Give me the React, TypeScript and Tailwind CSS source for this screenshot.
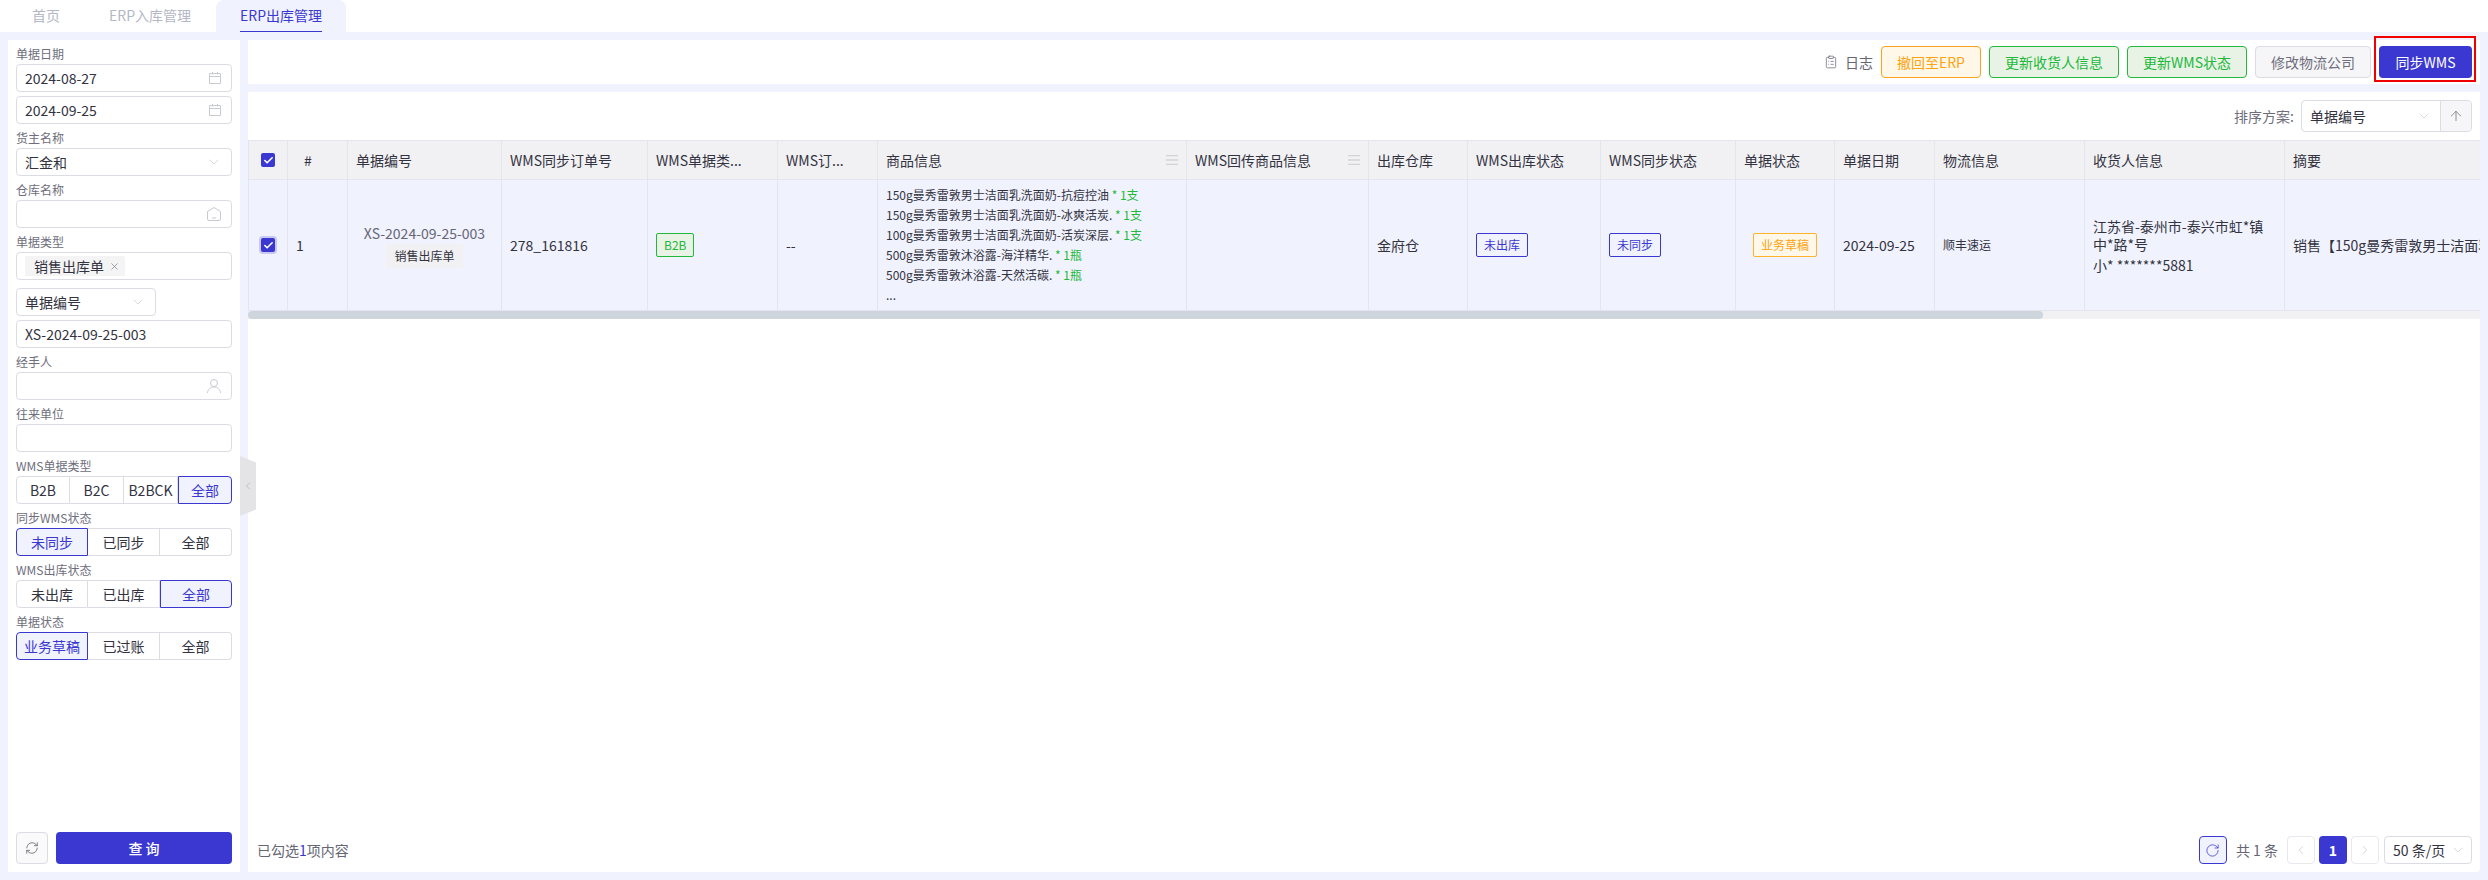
import React from 'react';
import { ClipboardList, RefreshCw, X, Check, ChevronDown, ChevronLeft, ChevronRight, ArrowUp, RotateCw } from 'lucide-react';

const CalendarIcon = () => (
  <svg width="14" height="14" viewBox="0 0 14 14" fill="none" stroke="#c9c9d1" strokeWidth="1" className="shrink-0">
    <path d="M1.5 2.5h11v10h-11z" />
    <path d="M1.5 5.5h11M4.5 1v2.5M9.5 1v2.5" />
  </svg>
);

const HouseIcon = () => (
  <svg width="16" height="16" viewBox="0 0 16 16" fill="none" stroke="#c9c9d1" strokeWidth="1" className="shrink-0">
    <path d="M1.5 5.5 8 1.5l6.5 4v7.5a1.5 1.5 0 0 1-1.5 1.5H3A1.5 1.5 0 0 1 1.5 13z" />
    <path d="M6 12h4" />
  </svg>
);

const UserIcon = () => (
  <svg width="16" height="16" viewBox="0 0 16 16" fill="none" stroke="#c9c9d1" strokeWidth="1" className="shrink-0">
    <circle cx="8" cy="5" r="3.5" />
    <path d="M1.5 15c.3-3.5 2.5-6 6.500-6s6.200 2.500 6.500 6" />
  </svg>
);

const MenuIcon = () => (
  <svg width="12" height="10" viewBox="0 0 12 10" className="shrink-0">
    <path d="M0 .5h12M0 5h12M0 9.500h12" stroke="#d4d4d8" strokeWidth="1.500" />
  </svg>
);

const Caret = () => <ChevronDown size={16} strokeWidth={1} className="text-[#c4c4cc] shrink-0" />;

const Label = ({ children }: { children: React.ReactNode }) => (
  <div className="h-[24px] pt-[6px] text-[12px] leading-[16px] text-[#6e6e7c]">{children}</div>
);

const Field = ({ children, className = '' }: { children?: React.ReactNode; className?: string }) => (
  <div className={`h-[28px] flex items-center justify-between pl-[8px] pr-[9px] border border-[#dcdce4] rounded-[4px] text-[14px] text-[#33333f] bg-white ${className}`}>
    {children}
  </div>
);

const Segments = ({ items, active }: { items: string[]; active: string }) => (
  <div className={`grid h-[28px] text-[14px] text-[#33333f] ${items.length === 4 ? 'grid-cols-4' : 'grid-cols-3'}`}>
    {items.map((item, i) => {
      const first = i === 0;
      const last = i === items.length - 1;
      return (
        <div
          key={item}
          className={`flex items-center justify-center border-y border-r ${first ? 'border-l rounded-l-[4px]' : ''} ${last ? 'rounded-r-[4px]' : ''} ${
            item === active ? 'border-[#3b38d1] border-l bg-[#f0f2fe] text-[#3b38d1]' : 'border-[#dcdce4]'
          }`}
        >
          {item}
        </div>
      );
    })}
  </div>
);

const Checkbox = ({ ring }: { ring?: boolean }) => (
  <div className={`mx-auto w-[14px] h-[14px] rounded-[2px] bg-[#3b38d1] flex items-center justify-center ${ring ? 'ring-2 ring-[#c9c8f0]' : ''}`}>
    <Check size={11} strokeWidth={3.500} className="text-white" />
  </div>
);

const Tag = ({ children, color }: { children: React.ReactNode; color: 'green' | 'blue' | 'orange' }) => (
  <span
    className={`inline-flex items-center h-[24px] px-[7px] text-[12px] border rounded-[2px] ${
      color === 'green'
        ? 'border-[#22b83a] bg-[#e8f3e6] text-[#22b83a]'
        : color === 'blue'
          ? 'border-[#3b38d1] text-[#3b38d1]'
          : 'border-[#fdb42b] bg-[#fff8e8] text-[#fca311]'
    }`}
  >
    {children}
  </span>
);

const columns = ['', '#', '单据编号', 'WMS同步订单号', 'WMS单据类...', 'WMS订...', '商品信息', 'WMS回传商品信息', '出库仓库', 'WMS出库状态', 'WMS同步状态', '单据状态', '单据日期', '物流信息', '收货人信息', '摘要'];

const goods = [
  ['150g曼秀雷敦男士洁面乳洗面奶-抗痘控油', '* 1支'],
  ['150g曼秀雷敦男士洁面乳洗面奶-冰爽活炭.', '* 1支'],
  ['100g曼秀雷敦男士洁面乳洗面奶-活炭深层.', '* 1支'],
  ['500g曼秀雷敦沐浴露-海洋精华.', '* 1瓶'],
  ['500g曼秀雷敦沐浴露-天然活碳.', '* 1瓶'],
];

const cell = 'border-r border-b border-[#e4e5ef] px-[8px] align-middle';

export default function App() {
  return (
    <div className="w-[2488px] h-[880px] flex flex-col bg-[#f0f2fe] overflow-hidden text-[#33333f] font-['Noto_Sans_CJK_SC','Noto_Sans',sans-serif]">
      {/* tabs */}
      <div className="h-[32px] shrink-0 bg-white flex pl-[8px] gap-[1px] text-[14px] text-[#b4b7c6]">
        <div className="px-[24px] leading-[30px]">首页</div>
        <div className="px-[24px] leading-[30px]">ERP入库管理</div>
        <div className="px-[24px] bg-[#f0f2fe] rounded-t-[8px] text-[#3b38d1]">
          <div className="h-[32px] leading-[30px] border-b border-[#3b38d1]">ERP出库管理</div>
        </div>
      </div>

      <div className="flex-1 flex gap-[8px] p-[8px] min-h-0">
        {/* filters */}
        <aside className="relative w-[232px] shrink-0 bg-white px-[8px] pb-[8px] flex flex-col">
          <Label>单据日期</Label>
          <div className="flex flex-col gap-[4px]">
            <Field>2024-08-27<CalendarIcon /></Field>
            <Field>2024-09-25<CalendarIcon /></Field>
          </div>
          <Label>货主名称</Label>
          <Field>汇金和<Caret /></Field>
          <Label>仓库名称</Label>
          <Field><span /><HouseIcon /></Field>
          <Label>单据类型</Label>
          <Field>
            <span className="h-[20px] bg-[#f4f4f5] rounded-[2px] pl-[9px] pr-[5px] flex items-center gap-[5px] text-[14px]">
              销售出库单
              <X size={11} strokeWidth={1.500} className="text-[#777785]" />
            </span>
          </Field>
          <Field className="w-[140px] mt-[8px]">单据编号<Caret /></Field>
          <Field className="mt-[4px]">XS-2024-09-25-003</Field>
          <Label>经手人</Label>
          <Field><span /><UserIcon /></Field>
          <Label>往来单位</Label>
          <Field />
          <Label>WMS单据类型</Label>
          <Segments items={['B2B', 'B2C', 'B2BCK', '全部']} active="全部" />
          <Label>同步WMS状态</Label>
          <Segments items={['未同步', '已同步', '全部']} active="未同步" />
          <Label>WMS出库状态</Label>
          <Segments items={['未出库', '已出库', '全部']} active="全部" />
          <Label>单据状态</Label>
          <Segments items={['业务草稿', '已过账', '全部']} active="业务草稿" />

          <div className="mt-auto flex gap-[8px] h-[32px]">
            <button className="w-[32px] flex items-center justify-center border border-[#dcdce4] rounded-[4px] bg-[#fafafa]">
              <RefreshCw size={14} strokeWidth={1.250} className="text-[#555560]" />
            </button>
            <button className="flex-1 bg-[#3b38d1] rounded-[4px] text-white text-[14px] font-medium">查 询</button>
          </div>

          {/* collapse handle */}
          <div className="absolute left-[232px] top-[416px] w-[16px] h-[60px] bg-[#e4e4e6] flex items-center justify-center [clip-path:polygon(0_0,100%_11%,100%_89%,0_100%)]">
            <ChevronLeft size={12} strokeWidth={1.250} className="text-[#a8a8b0]" />
          </div>
        </aside>

        <main className="flex-1 min-w-0 flex flex-col gap-[8px]">
          {/* toolbar */}
          <div className="h-[44px] shrink-0 bg-white flex items-center justify-end gap-[8px] pr-[8px] text-[14px]">
            <div className="flex items-center gap-[7px] text-[#666674] mr-[0px]">
              <ClipboardList size={14} strokeWidth={1.250} />
              日志
            </div>
            <button className="h-[32px] px-[15px] border border-[#fda01c] bg-[#fff8e8] text-[#fca311] rounded-[4px]">撤回至ERP</button>
            <button className="h-[32px] px-[15px] border border-[#22b83a] bg-[#e8f3e6] text-[#22b83a] rounded-[4px]">更新收货人信息</button>
            <button className="h-[32px] px-[15px] border border-[#22b83a] bg-[#e8f3e6] text-[#22b83a] rounded-[4px]">更新WMS状态</button>
            <button className="h-[32px] px-[15px] border border-[#dcdce4] bg-[#f6f6f8] text-[#6e6e7c] rounded-[4px]">修改物流公司</button>
            <div className="relative">
              <button className="h-[32px] w-[93px] bg-[#3b38d1] text-white rounded-[4px]">同步WMS</button>
              <div className="absolute -left-[5px] -right-[4px] -top-[10px] -bottom-[4px] border-2 border-[#f00000]" />
            </div>
          </div>

          {/* list */}
          <div className="flex-1 min-h-0 bg-white flex flex-col rounded-br-[4px]">
            <div className="h-[48px] shrink-0 flex items-center justify-end gap-[7px] pr-[8px] text-[14px] text-[#6e6e7c]">
              排序方案:
              <div className="w-[171px] h-[32px] flex items-center border border-[#dcdce4] rounded-[4px] text-[#33333f]">
                <div className="flex-1 flex items-center justify-between pl-[8px] pr-[8px]">单据编号<Caret /></div>
                <div className="w-[31px] h-full flex items-center justify-center bg-[#f6f6f8] border-l border-[#dcdce4] rounded-r-[4px]">
                  <ArrowUp size={16} strokeWidth={1.250} className="text-[#777785]" />
                </div>
              </div>
            </div>

            <div className="overflow-hidden shrink-0">
              <table className="table-fixed border-separate border-spacing-0 w-[2775px] text-[14px]">
                <colgroup>
                  <col className="w-[40px]" />
                  <col className="w-[60px]" />
                  <col className="w-[154px]" />
                  <col className="w-[146px]" />
                  <col className="w-[130px]" />
                  <col className="w-[100px]" />
                  <col className="w-[309px]" />
                  <col className="w-[182px]" />
                  <col className="w-[99px]" />
                  <col className="w-[133px]" />
                  <col className="w-[135px]" />
                  <col className="w-[99px]" />
                  <col className="w-[100px]" />
                  <col className="w-[150px]" />
                  <col className="w-[200px]" />
                  <col className="w-[738px]" />
                </colgroup>
                <thead>
                  <tr className="bg-[#f1f1f4]">
                    {columns.map((c, i) => (
                      <th key={i} className={`${cell} border-t h-[40px] font-normal text-left whitespace-nowrap ${i === 0 ? 'border-l' : ''} ${i === 1 ? 'pl-[16px]' : ''}`}>
                        {i === 0 ? (
                          <Checkbox />
                        ) : i === 6 || i === 7 ? (
                          <div className="flex items-center justify-between">
                            {c}
                            <MenuIcon />
                          </div>
                        ) : (
                          c
                        )}
                      </th>
                    ))}
                  </tr>
                </thead>
                <tbody>
                  <tr className="bg-[#f0f2fe]">
                    <td className={`${cell} border-l h-[131px]`}><Checkbox ring /></td>
                    <td className={cell}>1</td>
                    <td className={`${cell} text-center`}>
                      <div className="text-[#666674] leading-[22px]">XS-2024-09-25-003</div>
                      <span className="inline-flex items-center h-[24px] px-[8px] bg-[#f1f1f4] rounded-[2px] text-[12px]">销售出库单</span>
                    </td>
                    <td className={cell}>278_161816</td>
                    <td className={cell}><Tag color="green">B2B</Tag></td>
                    <td className={cell}>--</td>
                    <td className={`${cell} text-[12px] leading-[20px]`}>
                      {goods.map(([name, qty]) => (
                        <div key={name}>
                          {name} <span className="text-[#22b83a]">{qty}</span>
                        </div>
                      ))}
                      <div>...</div>
                    </td>
                    <td className={cell} />
                    <td className={cell}>金府仓</td>
                    <td className={cell}><Tag color="blue">未出库</Tag></td>
                    <td className={cell}><Tag color="blue">未同步</Tag></td>
                    <td className={`${cell} text-center`}><Tag color="orange">业务草稿</Tag></td>
                    <td className={cell}>2024-09-25</td>
                    <td className={`${cell} text-[12px]`}>顺丰速运</td>
                    <td className={`${cell} leading-[18px]`}>
                      <div>江苏省-泰州市-泰兴市虹*镇中*路*号</div>
                      <div className="mt-[3px]">小* *******5881</div>
                    </td>
                    <td className={`${cell} whitespace-nowrap`}>销售【150g曼秀雷敦男士洁面乳洗面奶-抗痘控油 * 1支】</td>
                  </tr>
                </tbody>
              </table>
            </div>
            {/* horizontal scrollbar */}
            <div className="h-[8px] shrink-0 bg-[#f1f1f4]">
              <div className="h-full w-[1795px] bg-[#cfd5dc] rounded-full" />
            </div>

            {/* footer */}
            <div className="mt-auto h-[28px] mb-[8px] shrink-0 flex items-center justify-between pl-[9px] pr-[8px] text-[14px]">
              <div className="text-[#666674]">已勾选<span className="text-[#3b38d1]">1</span>项内容</div>
              <div className="flex items-center h-full gap-[4px]">
                <div className="w-[28px] h-[28px] flex items-center justify-center border border-[#3b38d1] rounded-[4px] bg-[#f0f2fe]">
                  <RotateCw size={15} strokeWidth={1.250} className="text-[#3b38d1]" />
                </div>
                <div className="text-[#666674] px-[5px]">共 1 条</div>
                <div className="w-[28px] h-[28px] flex items-center justify-center border border-[#e8e8ee] rounded-[4px]">
                  <ChevronLeft size={14} strokeWidth={1.250} className="text-[#c4c4cc]" />
                </div>
                <div className="w-[28px] h-[28px] flex items-center justify-center bg-[#3b38d1] rounded-[4px] text-white font-bold">1</div>
                <div className="w-[28px] h-[28px] flex items-center justify-center border border-[#e8e8ee] rounded-[4px]">
                  <ChevronRight size={14} strokeWidth={1.250} className="text-[#c4c4cc]" />
                </div>
                <div className="w-[88px] h-[28px] flex items-center justify-between pl-[8px] pr-[5px] border border-[#dcdce4] rounded-[4px] ml-[1px]">
                  50 条/页<Caret />
                </div>
              </div>
            </div>
          </div>
        </main>
      </div>
    </div>
  );
}
